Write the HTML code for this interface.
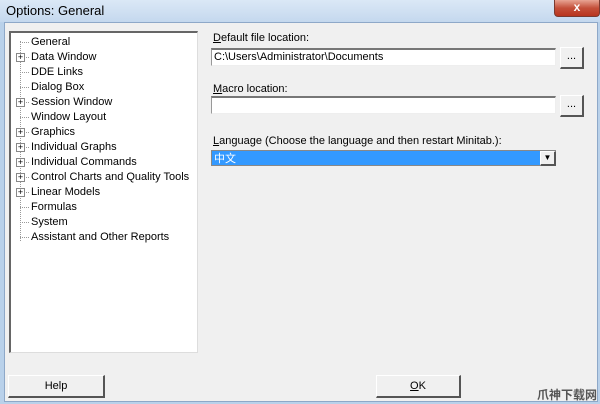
<!DOCTYPE html>
<html><head><style>
html,body{margin:0;width:600px;height:404px;overflow:hidden}
body{font-family:"Liberation Sans","Noto Sans CJK SC",sans-serif;font-size:11px;background:#b9d1ea;position:relative}
.a{position:absolute}
.title{left:0;top:0;width:600px;height:22px;background:linear-gradient(#dbe8f6,#c4d8ee)}
.title span{position:absolute;left:6px;top:3px;font-size:13px;color:#000}
.close{left:554px;top:0;width:44px;height:16px;background:linear-gradient(#e8a493,#c4503a 50%,#b8341e);border:1px solid #7a3a30;border-top:none;border-radius:0 0 4px 4px;color:#fff;text-align:center;font-weight:bold;font-size:12px;line-height:15px}
.client{left:4px;top:22px;width:592px;height:378px;background:#f0f0f0;border:1px solid #8ea8c8}
.tree{left:9px;top:31px;width:186px;height:319px;background:#fff;border-top:2px solid #666;border-left:2px solid #666;border-right:1px solid #ddd;border-bottom:1px solid #ddd}
.it{position:absolute;left:20px;font-size:11px;color:#000}
.ln{position:absolute;left:9px;width:9px;border-top:1px dotted #999}
.pl{position:absolute;left:5px;width:7px;height:7px;border:1px solid #888;background:#fff;font-size:9px;line-height:7px;text-align:center}
.lbl{font-size:11px;color:#000}
.fld{background:#fff;border-top:2px solid #777;border-left:1px solid #999;border-right:1px solid #eee;border-bottom:1px solid #eee;height:15px;font-size:11px;line-height:15px;padding-left:2px}
.btn{background:#f0f0f0;border-right:2px solid #555;border-bottom:2px solid #555;border-top:1px solid #fff;border-left:1px solid #fff;text-align:center;font-size:11px}
</style></head><body>
<div class="a title"><span>Options: General</span></div>
<div class="a close">x</div>
<div class="a client"></div>
<div class="a tree"><div style="position:absolute;left:0;top:2px;width:186px;height:300px">
<div style="position:absolute;left:9px;top:6px;height:200px;border-left:1px dotted #999"></div>
<div class="ln" style="top:7px"></div><div class="it" style="top:1px">General</div>
<div class="ln" style="top:22px"></div><div class="pl" style="top:18px">+</div><div class="it" style="top:16px">Data Window</div>
<div class="ln" style="top:37px"></div><div class="it" style="top:31px">DDE Links</div>
<div class="ln" style="top:52px"></div><div class="it" style="top:46px">Dialog Box</div>
<div class="ln" style="top:67px"></div><div class="pl" style="top:63px">+</div><div class="it" style="top:61px">Session Window</div>
<div class="ln" style="top:82px"></div><div class="it" style="top:76px">Window Layout</div>
<div class="ln" style="top:97px"></div><div class="pl" style="top:93px">+</div><div class="it" style="top:91px">Graphics</div>
<div class="ln" style="top:112px"></div><div class="pl" style="top:108px">+</div><div class="it" style="top:106px">Individual Graphs</div>
<div class="ln" style="top:127px"></div><div class="pl" style="top:123px">+</div><div class="it" style="top:121px">Individual Commands</div>
<div class="ln" style="top:142px"></div><div class="pl" style="top:138px">+</div><div class="it" style="top:136px">Control Charts and Quality Tools</div>
<div class="ln" style="top:157px"></div><div class="pl" style="top:153px">+</div><div class="it" style="top:151px">Linear Models</div>
<div class="ln" style="top:172px"></div><div class="it" style="top:166px">Formulas</div>
<div class="ln" style="top:187px"></div><div class="it" style="top:181px">System</div>
<div class="ln" style="top:202px"></div><div class="it" style="top:196px">Assistant and Other Reports</div>
</div></div>
<div class="a lbl" style="left:213px;top:32px"><u>D</u>efault file location:</div>
<div class="a fld" style="left:211px;top:48px;width:341px">C:\Users\Administrator\Documents</div>
<div class="a btn" style="left:560px;top:47px;width:21px;height:19px;line-height:17px">...</div>
<div class="a lbl" style="left:213px;top:83px"><u>M</u>acro location:</div>
<div class="a fld" style="left:211px;top:96px;width:341px"></div>
<div class="a btn" style="left:560px;top:95px;width:21px;height:19px;line-height:17px">...</div>
<div class="a lbl" style="left:213px;top:135px"><u>L</u>anguage (Choose the language and then restart Minitab.):</div>
<div class="a" style="left:211px;top:150px;height:16px;background:#3399ff;border:1px solid #888;color:#fff;font-size:11px;line-height:16px;padding-left:2px;box-sizing:border-box;width:345px">中文</div>
<div class="a btn" style="left:540px;top:151px;width:13px;height:12px;line-height:12px;font-size:8px">▼</div>
<div class="a btn" style="left:8px;top:375px;width:94px;height:20px;line-height:20px">Help</div>
<div class="a btn" style="left:376px;top:375px;width:82px;height:20px;line-height:20px"><u>O</u>K</div>
<div class="a" style="left:537px;top:386px;font-size:12px;color:#555;font-weight:bold;white-space:nowrap">爪神下载网</div>
</body></html>
